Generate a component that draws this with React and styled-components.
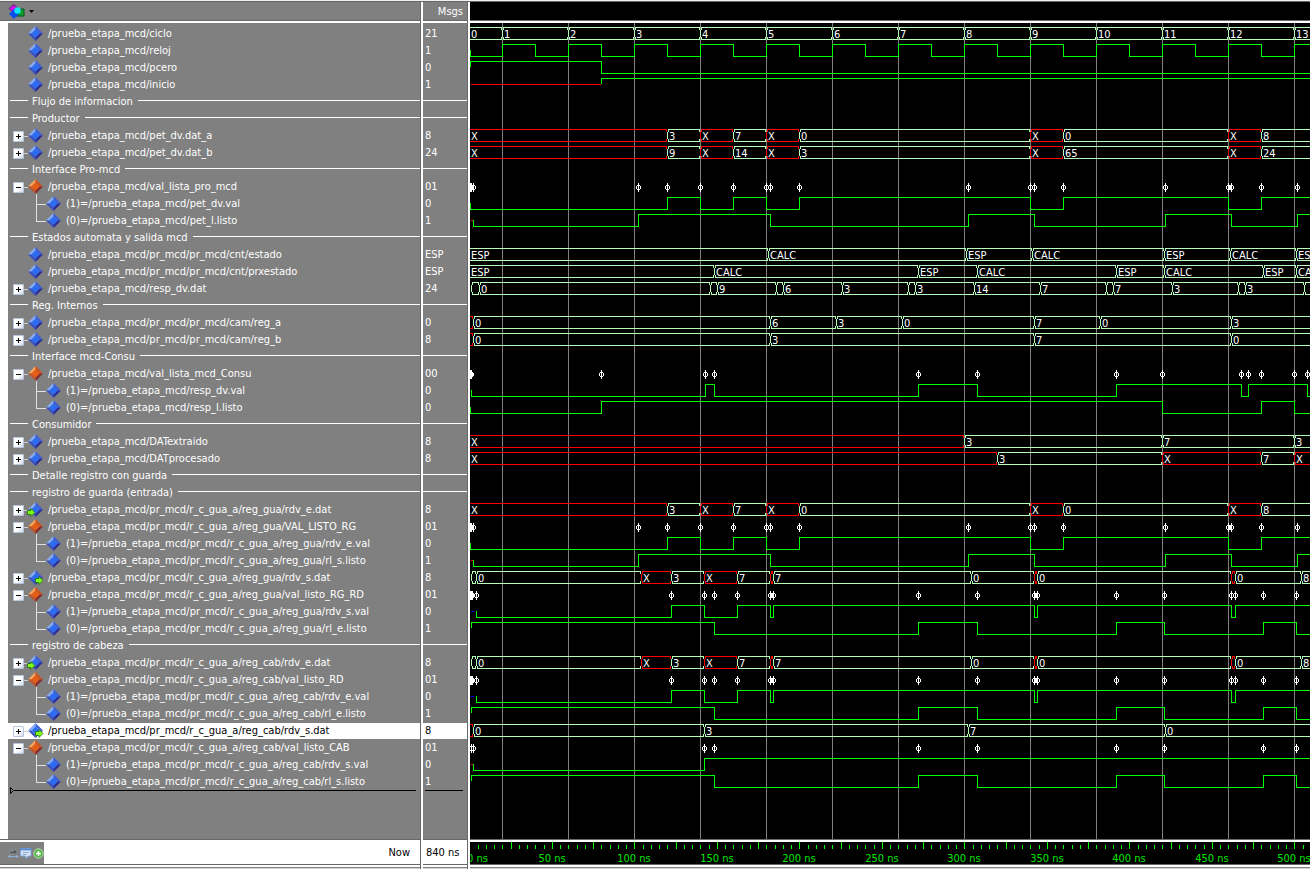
import React, { useEffect, useState } from "react";
import styled, { createGlobalStyle, css } from "styled-components";

const ROW = 17;
const SIDE = 470;

const Global = createGlobalStyle`
  *, *::before, *::after { box-sizing: border-box; }
  body {
    margin: 0;
    background: #808080;
    font-family: "DejaVu Sans Condensed", "DejaVu Sans", sans-serif;
    font-stretch: condensed;
    font-size: 11px;
    line-height: 16px;
  }
  ul { list-style: none; margin: 0; padding: 0; }
  button { border: 0; padding: 0; margin: 0; background: none; font: inherit; }
`;

/* ---------- signal data ---------- */

const RED = "#ff0000";
const BLUE = "#0000ff";
const GREEN = "#00ff00";
const PALE = "#b4ffb4";

const bus = (...segments) => ({ kind: "bus", segments });
const bit = (start, level, edges, ghost) => ({ kind: "bit", start, level, edges, ghost });
const events = (...at) => ({ kind: "events", at });

const clockEdges = Array.from({ length: 120 }, (_, i) => 32 + i * 33);

const cycleBus = bus([0, "0"], ...Array.from({ length: 13 }, (_, i) => [32 + 66 * i, String(i + 1)]));

const inputBus = (a, b, c, d, e) =>
  bus([0, "X"], [197, a], [230, "X"], [263, b], [296, "X"], [329, c], [560, "X"], [593, d], [758, "X"], [791, e]);
const inputEvents = events(0, 1, 3, 168, 197, 230, 263, 296, 300, 329, 498, 560, 564, 593, 695, 758, 761, 791, 827);
const inputVal = bit(0, 0, [197, 230, 263, 296, 329, 560, 593, 758, 791]);
const inputReady = bit(3, 0, [168, 300, 498, 564, 695, 761, 827], [RED, 1, 3]);

const headBus = bus(
  [1, ""], [6, "0"], [171, "X"], [201, "3"], [234, "X"], [267, "7"], [300, "", 1], [303, "7"],
  [501, "0"], [564, "", 1], [567, "0"], [761, "", 1], [765, "0"], [831, "8"]
);
const headEvents = events(0, 1, 2, 6, 201, 234, 244, 267, 300, 303, 448, 507, 564, 567, 646, 694, 761, 765, 793, 826);
const headVal = bit(6, 0, [201, 234, 267, 300, 303, 564, 567, 761, 765], [BLUE, 1, 4]);
const headReady = bit(1, 1, [244, 448, 507, 646, 694, 793, 826]);

const TOP = "/prueba_etapa_mcd/";
const GUA = TOP + "pr_mcd/r_c_gua_a/reg_gua/";
const CAB = TOP + "pr_mcd/r_c_gua_a/reg_cab/";

const signal = (name, value, wave, extra) => ({ name, value, wave, ...extra });
const divider = (title) => ({ title });
const PLUS = { toggle: "+" };
const GROUP = { toggle: "-", tone: "orange" };
const MIDDLE = { branch: "middle" };
const LAST = { branch: "last" };

const rows = [
  signal(TOP + "ciclo", "21", cycleBus),
  signal(TOP + "reloj", "1", bit(0, 0, clockEdges)),
  signal(TOP + "pcero", "0", bit(0, 1, [131])),
  signal(TOP + "inicio", "1", bit(131, 1, [], [RED, 1, 131])),
  divider("Flujo de informacion"),
  divider("Productor"),
  signal(TOP + "pet_dv.dat_a", "8", inputBus("3", "7", "0", "0", "8"), PLUS),
  signal(TOP + "pet_dv.dat_b", "24", inputBus("9", "14", "3", "65", "24"), PLUS),
  divider("Interface Pro-mcd"),
  signal(TOP + "val_lista_pro_mcd", "01", inputEvents, GROUP),
  signal("(1)=" + TOP + "pet_dv.val", "0", inputVal, MIDDLE),
  signal("(0)=" + TOP + "pet_l.listo", "1", inputReady, LAST),
  divider("Estados automata y salida mcd"),
  signal(TOP + "pr_mcd/pr_mcd/cnt/estado", "ESP",
    bus([0, "ESP"], [298, "CALC"], [496, "ESP"], [562, "CALC"], [694, "ESP"], [760, "CALC"], [826, "ESP"])),
  signal(TOP + "pr_mcd/pr_mcd/cnt/prxestado", "ESP",
    bus([0, "ESP"], [244, "CALC"], [448, "ESP"], [507, "CALC"], [646, "ESP"], [694, "CALC"], [793, "ESP"], [826, "CALC"])),
  signal(TOP + "resp_dv.dat", "24",
    bus([1, ""], [9, "0"], [240, ""], [247, "9"], [306, ""], [313, "6"], [372, "3"], [438, ""], [445, "3"],
      [504, "14"], [570, "7"], [636, ""], [643, "7"], [702, "3"], [768, ""], [775, "3"], [834, ""]), PLUS),
  divider("Reg. Internos"),
  signal(TOP + "pr_mcd/pr_mcd/cam/reg_a", "0",
    bus([0, "", 1], [3, "0"], [300, "6"], [366, "3"], [432, "0"], [564, "7"], [630, "0"], [761, "3"]), PLUS),
  signal(TOP + "pr_mcd/pr_mcd/cam/reg_b", "8",
    bus([0, "", 1], [3, "0"], [300, "3"], [564, "7"], [761, "0"]), PLUS),
  divider("Interface mcd-Consu"),
  signal(TOP + "val_lista_mcd_Consu", "00",
    events(0, 1, 131, 235, 244, 448, 507, 646, 692, 771, 778, 791, 824, 837), GROUP),
  signal("(1)=" + TOP + "resp_dv.val", "0", bit(1, 0, [235, 244, 448, 507, 646, 771, 778, 837]), MIDDLE),
  signal("(0)=" + TOP + "resp_l.listo", "0", bit(0, 0, [131, 692, 791, 824]), LAST),
  divider("Consumidor"),
  signal(TOP + "DATextraido", "8", bus([0, "X"], [494, "3"], [692, "7"], [824, "3"]), PLUS),
  signal(TOP + "DATprocesado", "8", bus([0, "X"], [527, "3"], [692, "X"], [791, "7"], [824, "X"]), PLUS),
  divider("Detalle registro con guarda"),
  divider("registro de guarda (entrada)"),
  signal(GUA + "rdv_e.dat", "8", inputBus("3", "7", "0", "0", "8"), { toggle: "+", port: "in" }),
  signal(GUA + "VAL_LISTO_RG", "01", inputEvents, GROUP),
  signal("(1)=" + GUA + "rdv_e.val", "0", inputVal, MIDDLE),
  signal("(0)=" + GUA + "rl_s.listo", "1", inputReady, LAST),
  signal(GUA + "rdv_s.dat", "8", headBus, { toggle: "+", port: "out" }),
  signal(GUA + "val_listo_RG_RD", "01", headEvents, GROUP),
  signal("(1)=" + GUA + "rdv_s.val", "0", headVal, MIDDLE),
  signal("(0)=" + GUA + "rl_e.listo", "1", headReady, LAST),
  divider("registro de cabeza"),
  signal(CAB + "rdv_e.dat", "8", headBus, { toggle: "+", port: "in" }),
  signal(CAB + "val_listo_RD", "01", headEvents, GROUP),
  signal("(1)=" + CAB + "rdv_e.val", "0", headVal, MIDDLE),
  signal("(0)=" + CAB + "rl_e.listo", "1", headReady, LAST),
  signal(CAB + "rdv_s.dat", "8", bus([0, "", 1], [3, "0"], [234, "3"], [498, "7"], [695, "0"]),
    { toggle: "+", port: "out", selected: true }),
  signal(CAB + "val_listo_CAB", "01", events(1, 3, 234, 244, 448, 507, 646, 694, 793, 826), GROUP),
  signal("(1)=" + CAB + "rdv_s.val", "0", bit(3, 0, [234], [RED, 1, 3]), MIDDLE),
  signal("(0)=" + CAB + "rl_s.listo", "1", headReady, LAST),
];

/* ---------- window frame ---------- */

const Window = styled.main`
  display: grid;
  grid-template-columns: 423px 47px minmax(0, 1fr);
  min-height: 100vh;
  border-top: 1px solid #f0f0f0;
  box-shadow: inset 0 1px 0 #696969;
  padding-top: 1px;
`;

const Pane = styled.section`
  display: flex;
  flex-direction: column;
  min-width: 0;
  background: ${(p) => (p.$dark ? "#000" : "#808080")};
  ${(p) =>
    !p.$dark &&
    css`
      border-right: 2px solid #fff;
      box-shadow: inset -1px 0 0 #696969;
      padding-right: 1px;
    `}
`;

const PaneHeader = styled.header`
  display: flex;
  align-items: center;
  justify-content: ${(p) => (p.$end ? "flex-end" : "flex-start")};
  height: 21px;
  padding: 0 ${(p) => (p.$end ? 4 : 0)}px 0 ${(p) => (p.$end ? 0 : 8)}px;
  border-bottom: 2px solid #fff;
  box-shadow: inset 0 -1px 0 #696969;
  color: #fff;
`;

const PaneBody = styled.div`
  flex: 1;
  display: flex;
  flex-direction: column;
  padding: ${(p) => (p.$flush ? 0 : 3)}px 0 ${(p) => (p.$flush ? 0 : 45)}px;
  border-left: ${(p) => (p.$gutter ? 8 : 0)}px solid #fff;
`;

const PaneFooter = styled.footer`
  display: flex;
  align-items: stretch;
  height: 28px;
  padding: 3px 0;
  background: ${(p) => (p.$dark ? "#000" : "#fff")};
  color: #000;
  border-bottom: 0;
  box-shadow: inset 0 1px 0 #696969, inset 0 3px 0 #fff, inset 0 -2px 0 #fff, inset 0 -3px 0 #696969;
`;

const ScrollStrip = styled.div`
  height: 2px;
  background: #d4d4d4;
  border-top: 1px solid #808080;
`;

const MenuButton = styled.button`
  display: flex;
  align-items: center;
  gap: 4px;
  color: #000;
`;

/* ---------- name and value columns ---------- */

const NameRow = styled.li`
  display: flex;
  height: ${ROW}px;
  padding-left: 5px;
  border-bottom: 1px solid #808080;
  white-space: nowrap;
  background: ${(p) => (p.$selected ? "#fff" : "transparent")};
  color: ${(p) => (p.$selected ? "#000" : "#fff")};
`;

const Label = styled.span`
  margin-left: 4px;
`;

const Toggle = styled.button`
  width: 11px;
  height: 11px;
  margin-top: 3px;
  border-radius: 2px;
  background: linear-gradient(135deg, #fff 55%, #c3cfe2);
  box-shadow: inset 0 0 0 1px #b8c6dc;
`;

const Stub = styled.span`
  width: 4px;
  height: 1px;
  margin-top: 8px;
  background: #d0d0d0;
`;

const Spacer = styled.span`
  width: 15px;
`;

const Art = styled.svg`
  display: block;
  flex: none;
  overflow: visible;
`;

const DividerRow = styled.li`
  display: flex;
  height: ${ROW}px;
  padding-left: 2px;
  color: #fff;
  white-space: nowrap;
`;

const Rule = styled.span`
  flex: ${(p) => (p.$lead ? "none" : "1")};
  width: ${(p) => (p.$lead ? "18px" : "auto")};
  height: 1px;
  margin-top: 6px;
  background: #fff;
`;

const DividerTitle = styled.span`
  margin: 0 5px 0 4px;
`;

const ValueRow = styled.li`
  height: ${ROW}px;
  padding-left: 2px;
  border-bottom: 1px solid #808080;
  background: ${(p) => (p.$selected ? "#fff" : "transparent")};
  color: ${(p) => (p.$selected ? "#000" : "#fff")};
`;

const ValueDivider = styled.li`
  display: flex;
  height: ${ROW}px;
`;

const InsertMark = styled.div`
  display: flex;
  align-items: center;
  height: 7px;
  margin: -4px 4px 0 2px;
`;

const InsertLine = styled.span`
  flex: 1;
  height: 1px;
  background: #000;
`;

const FooterTools = styled.div`
  display: flex;
  align-items: center;
  gap: 1px;
  width: 44px;
  padding-left: 8px;
  background: #808080;
`;

const FooterText = styled.div`
  flex: 1;
  display: flex;
  align-items: center;
  justify-content: ${(p) => (p.$end ? "flex-end" : "flex-start")};
  padding: 0 ${(p) => (p.$end ? 10 : 0)}px 0 ${(p) => (p.$end ? 0 : 3)}px;
  white-space: nowrap;
`;

/* ---------- wave area ---------- */

const WaveCanvas = styled.svg`
  display: block;
  flex: 1;
  width: 100%;
  min-height: 816px;
  overflow: hidden;
  shape-rendering: crispEdges;
`;

const Ruler = styled.svg`
  display: block;
  width: 100%;
  height: 22px;
  overflow: hidden;
  shape-rendering: crispEdges;
`;

const BusText = styled.text`
  fill: #fff;
`;

const RulerText = styled.text`
  fill: #00e600;
`;

/* ---------- icons ---------- */

const tones = {
  blue: { light: "#86abf5", upper: "#3d5fd8", lower: "#3a52c4", dark: "#2a2c98", core: "#286cf8" },
  orange: { light: "#f9a457", upper: "#d0521c", lower: "#c0562a", dark: "#862a2c", core: "#e85c14" },
};

function Diamond({ tone = "blue", port }) {
  const c = tones[tone];
  return (
    <Art width="16" height="16" viewBox="0 0 16 16" aria-hidden="true">
      <path d="M7.5 0 L0 7.5 L3.5 7.5 L7.5 3.5Z" fill={c.light} />
      <path d="M7.5 0 L15 7.5 L11.5 7.5 L7.5 3.5Z" fill={c.upper} />
      <path d="M0 7.5 L7.5 15 L7.5 11.5 L3.5 7.5Z" fill={c.lower} />
      <path d="M15 7.5 L7.5 15 L7.5 11.5 L11.5 7.5Z" fill={c.dark} />
      <path d="M7.5 3.5 L11.5 7.5 L7.5 11.5 L3.5 7.5Z" fill={c.core} />
      {port && (
        <path
          transform={port === "in" ? "translate(-1 6)" : "translate(7 6)"}
          d="M0.5 2.5 H4 V0.5 L8 4.5 L4 8.5 V6.5 H0.5Z"
          fill="#7dff1a"
          stroke="#1c6a10"
          strokeWidth="0.8"
        />
      )}
    </Art>
  );
}

function Branch({ kind }) {
  return (
    <Art width="33" height="16" aria-hidden="true" shapeRendering="crispEdges">
      <path
        d={kind === "last" ? "M23.5 0 V8.5 H33" : "M23.5 -2 V17 M23.5 8.5 H33"}
        fill="none"
        stroke="#e0e0e0"
      />
    </Art>
  );
}

function ToggleGlyph({ sign }) {
  return (
    <Art width="11" height="11" aria-hidden="true" shapeRendering="crispEdges">
      <path d={sign === "+" ? "M3 5.5 H8 M5.5 3 V8" : "M3 5.5 H8"} stroke="#000" />
    </Art>
  );
}

function ShapesIcon() {
  return (
    <Art width="17" height="16" viewBox="0 0 17 16" aria-hidden="true">
      <path d="M8 5 H16 V12 H8Z" fill="#10a030" stroke="#005818" />
      <path d="M1 4.5 L6 0.5 L9.5 4 L4.5 8Z" fill="#d010e8" stroke="#50105c" strokeWidth="0.7" />
      <path d="M1 10 L6 5 L11 10 L6 15Z" fill="#0a50e8" />
      <circle cx="9.5" cy="6.5" r="3.2" fill="#10e8f8" />
    </Art>
  );
}

function ZoomTimeIcon() {
  return (
    <Art width="11" height="11" viewBox="0 0 11 11" aria-hidden="true">
      <path d="M1.5 5 L3 1.5 L4.5 4 L6 1 L9 3 V6 H2.5Z" fill="#555a60" stroke="#9aa0a8" strokeWidth="0.7" />
      <path d="M0.5 8.5 H10 M2 7 L0.5 8.5 L2 10 M8.5 7 L10 8.5 L8.5 10" fill="none" stroke="#8fb2dc" />
    </Art>
  );
}

function NoteIcon() {
  return (
    <Art width="12" height="11" viewBox="0 0 12 11" aria-hidden="true">
      <path d="M0.5 1 H11 V8 H8 L6.5 10.5 L5.5 8 H0.5Z" fill="#dce9fa" stroke="#7fa6de" />
      <path d="M0 1.5 H11.5" stroke="#5b90dc" strokeWidth="2" />
      <path d="M2.5 4.5 H9 M2.5 6.5 H7" stroke="#8fa8c8" />
    </Art>
  );
}

function AddIcon() {
  return (
    <Art width="11" height="11" viewBox="0 0 11 11" aria-hidden="true">
      <circle cx="5.5" cy="5.5" r="4.7" fill="#58b850" stroke="#b4e0ac" />
      <path d="M5.5 3 V8 M3 5.5 H8" stroke="#fff" strokeWidth="1.6" />
    </Art>
  );
}

/* ---------- wave drawing ---------- */

function BitWave({ wave, width }) {
  const y = (level) => (level ? 1.5 : 13.5);
  let level = wave.level;
  let d = `M${wave.start + 0.5} 7 V${y(level)}`;
  wave.edges.forEach((x) => {
    if (x > width) return;
    level = 1 - level;
    d += ` H${x + 0.5} V${y(level)}`;
  });
  d += ` H${width}`;
  return (
    <>
      {wave.ghost && <path d={`M${wave.ghost[1]} 7.5 H${wave.ghost[2]}`} stroke={wave.ghost[0]} />}
      <path d={d} fill="none" stroke={GREEN} />
    </>
  );
}

function BusWave({ wave, width }) {
  return wave.segments.map(([x, text, unknown], i) => {
    if (x > width) return null;
    const color = unknown || text === "X" ? RED : PALE;
    const next = wave.segments[i + 1];
    const end = next ? next[0] : width + 10;
    const begin = x === 0 ? 0 : x + 1;
    let d = `M${begin} 1.5 H${end} M${begin} 13.5 H${end}`;
    if (next) d += ` M${end - 0.5} 1 V4 M${end - 0.5} 11 V14`;
    if (x > 0) d += ` M${x + 0.5} 4 V11 M${x + 1.5} 1 V4 M${x + 1.5} 11 V14`;
    return (
      <g key={x}>
        <path d={d} stroke={color} fill="none" />
        {text && (
          <BusText x={x === 0 ? 1 : x + 2} y="12">
            {text}
          </BusText>
        )}
      </g>
    );
  });
}

function EventMarks({ wave }) {
  const d = wave.at
    .map(
      (x) =>
        `M${x} 4h1v9h-1z M${x - 2} 7h1v3h-1z M${x + 2} 7h1v3h-1z M${x - 1} 6h3v1h-3z M${x - 1} 10h3v1h-3z`
    )
    .join(" ");
  return <path d={d} fill="#fff" />;
}

const renderers = { bit: BitWave, bus: BusWave, events: EventMarks };

function useWaveWidth() {
  const [width, setWidth] = useState(window.innerWidth - SIDE);
  useEffect(() => {
    const update = () => setWidth(window.innerWidth - SIDE);
    window.addEventListener("resize", update);
    return () => window.removeEventListener("resize", update);
  }, []);
  return Math.max(width, 0);
}

function Waves({ width }) {
  const gridCount = Math.max(0, Math.ceil((width - 32) / 66));
  return (
    <WaveCanvas role="img" aria-label="Formas de onda">
      {Array.from({ length: gridCount }, (_, i) => (
        <rect key={i} x={32 + i * 66} y="0" width="1" height="100%" fill="#808080" />
      ))}
      {rows.map((row, i) => {
        if (!row.wave) return null;
        const Renderer = renderers[row.wave.kind];
        return (
          <g key={i} transform={`translate(0 ${3 + i * ROW})`}>
            <Renderer wave={row.wave} width={width} />
          </g>
        );
      })}
    </WaveCanvas>
  );
}

function TimeRuler({ width }) {
  const count = Math.floor(width / 8.25) + 1;
  const ticks = Array.from({ length: count }, (_, i) => i * 5);
  const at = (ns) => Math.ceil(ns * 1.65) - 1;
  return (
    <Ruler role="img" aria-label="Escala de tiempo">
      {ticks.map((ns) => (
        <rect
          key={ns}
          x={at(ns)}
          y={ns % 25 === 0 ? 0 : 3}
          width="1"
          height={ns % 25 === 0 ? 7 : 4}
          fill={GREEN}
        />
      ))}
      {ticks
        .filter((ns) => ns % 50 === 0)
        .map((ns) => (
          <RulerText key={ns} x={ns === 0 ? -3 : at(ns)} y="20" textAnchor={ns === 0 ? "start" : "middle"}>
            {ns} ns
          </RulerText>
        ))}
    </Ruler>
  );
}

/* ---------- page ---------- */

function NameEntry({ row }) {
  if (row.title) {
    return (
      <DividerRow>
        <Rule $lead />
        <DividerTitle>{row.title}</DividerTitle>
        <Rule />
      </DividerRow>
    );
  }
  return (
    <NameRow $selected={row.selected}>
      {row.branch && <Branch kind={row.branch} />}
      {row.toggle && (
        <>
          <Toggle type="button" aria-label={row.toggle === "+" ? "Expandir" : "Contraer"}>
            <ToggleGlyph sign={row.toggle} />
          </Toggle>
          <Stub />
        </>
      )}
      {!row.branch && !row.toggle && <Spacer />}
      <Diamond tone={row.tone} port={row.port} />
      <Label>{row.name}</Label>
    </NameRow>
  );
}

export default function App() {
  const width = useWaveWidth();
  return (
    <>
      <Global />
      <Window>
        <Pane>
          <PaneHeader>
            <MenuButton type="button" aria-label="Objetos">
              <ShapesIcon />
              <Art width="5" height="3" aria-hidden="true">
                <path d="M0 0 H5 L2.5 3Z" fill="#000" />
              </Art>
            </MenuButton>
          </PaneHeader>
          <PaneBody $gutter>
            <ul>
              {rows.map((row, i) => (
                <NameEntry key={i} row={row} />
              ))}
            </ul>
            <InsertMark>
              <Art width="4" height="7" aria-hidden="true">
                <path d="M0.5 0.5 L3.5 3.5 L0.5 6.5Z" fill="none" stroke="#000" />
              </Art>
              <InsertLine />
            </InsertMark>
          </PaneBody>
          <PaneFooter>
            <FooterTools>
              <button type="button" aria-label="Ajustar tiempo"><ZoomTimeIcon /></button>
              <button type="button" aria-label="Notas"><NoteIcon /></button>
              <button type="button" aria-label="Agregar cursor"><AddIcon /></button>
            </FooterTools>
            <FooterText $end>Now</FooterText>
          </PaneFooter>
          <ScrollStrip />
        </Pane>
        <Pane>
          <PaneHeader $end>Msgs</PaneHeader>
          <PaneBody>
            <ul>
              {rows.map((row, i) =>
                row.title ? (
                  <ValueDivider key={i}>
                    <Rule />
                  </ValueDivider>
                ) : (
                  <ValueRow key={i} $selected={row.selected}>
                    {row.value}
                  </ValueRow>
                )
              )}
            </ul>
            <InsertMark>
              <InsertLine />
            </InsertMark>
          </PaneBody>
          <PaneFooter>
            <FooterText>840 ns</FooterText>
          </PaneFooter>
          <ScrollStrip />
        </Pane>
        <Pane $dark>
          <PaneHeader />
          <PaneBody $flush>
            <Waves width={width} />
          </PaneBody>
          <PaneFooter $dark>
            <TimeRuler width={width} />
          </PaneFooter>
          <ScrollStrip />
        </Pane>
      </Window>
    </>
  );
}
